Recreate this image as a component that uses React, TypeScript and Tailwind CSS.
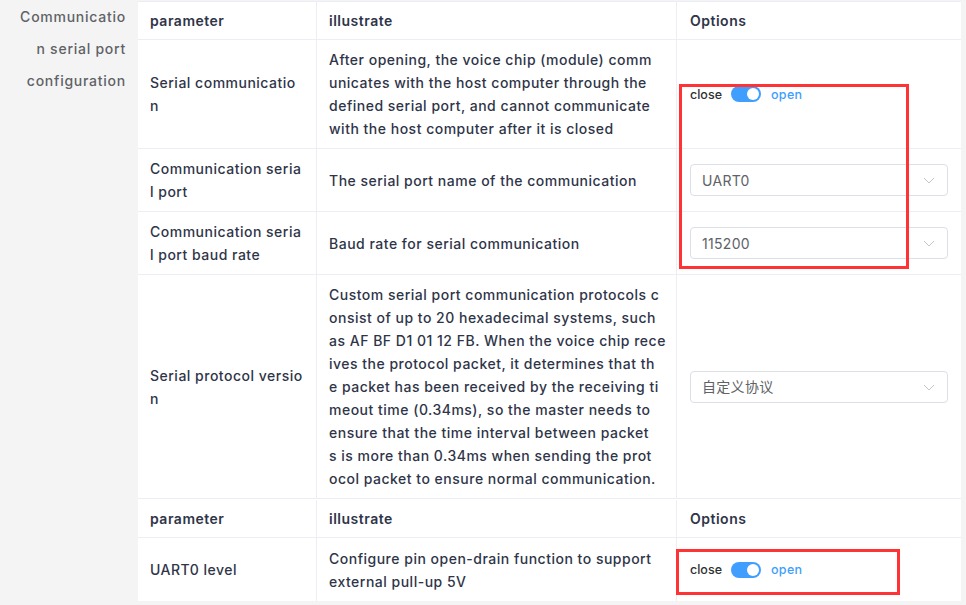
import React from "react";

const font = "font-['Inter','Noto_Sans_CJK_SC',sans-serif]";

function Toggle() {
  return (
    <div className="flex items-center text-[12.5px] tracking-normal">
      <span className="font-medium text-[#303133]">close</span>
      <span className="relative ml-[9px] inline-block h-4 w-[30px] rounded-full bg-[#409eff]">
        <span className="absolute right-[2px] top-[2px] h-3 w-3 rounded-full bg-white" />
      </span>
      <span className="ml-[10px] font-medium tracking-[0.3px] text-[#409eff]">open</span>
    </div>
  );
}

function Select({ value }: { value: string }) {
  return (
    <div className="flex h-8 w-full items-center justify-between rounded-[4px] border border-[#dcdfe6] bg-white pl-[11px] pr-3 text-[14px] font-normal tracking-[0.3px] text-[#606266]">
      <span>{value}</span>
      <svg width="12" height="12" viewBox="0 0 12 12" fill="none">
        <path d="M1 4l5 5 5-5" stroke="#c0c4cc" strokeWidth="1" />
      </svg>
    </div>
  );
}

function Lines({ lines }: { lines: string[] }) {
  return (
    <div>
      {lines.map((l, i) => (
        <div key={i} className="whitespace-nowrap">
          {l}
        </div>
      ))}
    </div>
  );
}

type Row = { param: string[]; desc: string[]; option: React.ReactNode };

const rows: Row[] = [
  {
    param: ["Serial communicatio", "n"],
    desc: [
      "After opening, the voice chip (module) comm",
      "unicates with the host computer through the",
      "defined serial port, and cannot communicate",
      "with the host computer after it is closed",
    ],
    option: <Toggle />,
  },
  {
    param: ["Communication seria", "l port"],
    desc: ["The serial port name of the communication"],
    option: <Select value="UART0" />,
  },
  {
    param: ["Communication seria", "l port baud rate"],
    desc: ["Baud rate for serial communication"],
    option: <Select value="115200" />,
  },
  {
    param: ["Serial protocol versio", "n"],
    desc: [
      "Custom serial port communication protocols c",
      "onsist of up to 20 hexadecimal systems, such",
      "as AF BF D1 01 12 FB. When the voice chip rece",
      "ives the protocol packet, it determines that th",
      "e packet has been received by the receiving ti",
      "meout time (0.34ms), so the master needs to",
      "ensure that the time interval between packet",
      "s is more than 0.34ms when sending the prot",
      "ocol packet to ensure normal communication.",
    ],
    option: <Select value="自定义协议" />,
  },
];

function HeaderRow() {
  return (
    <div className="flex h-[38px] border-b border-[#ebeef5] font-semibold">
      <div className="flex w-[179px] items-center border-r border-[#ebeef5] px-3">parameter</div>
      <div className="flex w-[360px] items-center border-r border-[#ebeef5] px-3">illustrate</div>
      <div className="flex flex-1 items-center px-[13px]">Options</div>
    </div>
  );
}

function BodyRow({ row }: { row: Row }) {
  return (
    <div className="flex border-b border-[#ebeef5]">
      <div className="flex w-[179px] items-center border-r border-[#ebeef5] px-3 py-2">
        <Lines lines={row.param} />
      </div>
      <div className="flex w-[360px] items-center border-r border-[#ebeef5] px-3 py-2">
        <Lines lines={row.desc} />
      </div>
      <div className="flex flex-1 items-center px-[13px] py-2">{row.option}</div>
    </div>
  );
}

export default function App() {
  return (
    <div className={`relative flex h-[605px] w-[966px] overflow-hidden bg-[#f4f4f5] ${font}`}>
      <div className="w-[138px] shrink-0 pr-[12px] pt-px text-right text-[14px] font-medium leading-[32px] tracking-[0.75px] text-[#606266]">
        <div>Communicatio</div>
        <div>n serial port</div>
        <div>configuration</div>
      </div>
      <div className="mr-[5px] mt-px flex-1 self-start border-t border-[#ebeef5] bg-white text-[14px] font-medium leading-[23px] tracking-[0.5px] text-[#2f3548]">
        <HeaderRow />
        {rows.map((r, i) => (
          <BodyRow key={i} row={r} />
        ))}
        <div className="h-px" />
        <HeaderRow />
        <div className="flex h-[63px]">
          <div className="flex w-[179px] items-center border-r border-[#ebeef5] px-3">
            UART0 level
          </div>
          <div className="flex w-[360px] items-center border-r border-[#ebeef5] px-3">
            <Lines lines={["Configure pin open-drain function to support", "external pull-up 5V"]} />
          </div>
          <div className="flex flex-1 items-center px-[13px]">
            <Toggle />
          </div>
        </div>
      </div>

      <div className="pointer-events-none absolute left-[679px] top-[84px] h-[185px] w-[230px] border-[3px] border-[#f33]" />
      <div className="pointer-events-none absolute left-[676px] top-[549px] h-[46px] w-[224px] border-[3px] border-[#f33]" />
    </div>
  );
}
